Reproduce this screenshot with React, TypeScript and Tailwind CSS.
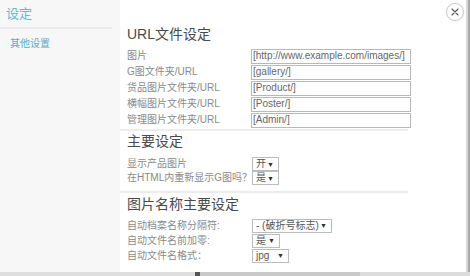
const FONT = "font-['Liberation_Sans','Noto_Sans_CJK_SC',sans-serif]"

const urlFields = [
  { label: '图片', value: '[http://www.example.com/images/]' },
  { label: 'G图文件夹/URL', value: '[gallery/]' },
  { label: '货品图片文件夹/URL', value: '[Product/]' },
  { label: '横幅图片文件夹/URL', value: '[Poster/]' },
  { label: '管理图片文件夹/URL', value: '[Admin/]' },
]

function SectionTitle({ children }: { children: React.ReactNode }) {
  return <h2 className="text-[14px] leading-[16px] text-[#4a4a4a]">{children}</h2>
}

function Divider() {
  return <div className="-ml-[7px] h-[2px] w-[288px] bg-[#ededed]" />
}

function FakeSelect({ value, width }: { value: string; width: string }) {
  return (
    <div
      className={`flex h-[14px] items-center justify-between border border-[#bcbcbc] bg-white pl-[3px] pr-[4px] text-[10px] text-[#555] ${width}`}
    >
      <span className="whitespace-nowrap leading-none">{value}</span>
      <span className="text-[7px] leading-none text-[#333]">▼</span>
    </div>
  )
}

function SelectRow({ label, value, width, h }: { label: string; value: string; width: string; h: string }) {
  return (
    <div className={`flex items-center ${h}`}>
      <span className="w-[125px] whitespace-nowrap text-[10px] leading-none text-[#8a8a8a]">{label}</span>
      <FakeSelect value={value} width={width} />
    </div>
  )
}

export default function App() {
  return (
    <div className={`flex h-[276px] w-[470px] flex-col overflow-hidden bg-[#d4d4d4] ${FONT}`}>
      <div className="flex h-[272px]">
        <div className="flex w-[466px] bg-white">
          {/* sidebar */}
          <aside className="w-[120px] bg-[#f7f7f7]">
            <div className="pl-[6px] pt-[6px] text-[13px] leading-[16px] text-[#62b9d1]">设定</div>
            <div className="mt-[5px] h-[2px] w-[112px] bg-[#ebebeb]" />
            <div className="pl-[10px] pt-[9px] text-[10px] leading-[12px] text-[#55adc6]">其他设置</div>
          </aside>

          {/* main */}
          <main className="relative flex-1 pl-[7px] pt-[26px]">
            <button className="absolute left-[326px] top-[3px] flex h-[18px] w-[18px] items-center justify-center rounded-full border border-[#cccccc] bg-white shadow-[0_0_2px_rgba(0,0,0,0.12)]">
              <svg width="8" height="8" viewBox="0 0 8 8" stroke="#555" strokeWidth="1.1" strokeLinecap="round">
                <path d="M1 1l6 6M7 1l-6 6" />
              </svg>
            </button>

            <SectionTitle>URL文件设定</SectionTitle>
            <div className="mt-[6px] flex flex-col">
              {urlFields.map((f) => (
                <div key={f.label} className="flex h-[16px] items-center">
                  <span className="w-[124px] text-[10px] leading-none text-[#8a8a8a]">{f.label}</span>
                  <div className="flex h-[15px] w-[160px] items-center border border-[#b8b8b8] px-[1px] text-[10px] leading-none text-[#666]">
                    {f.value}
                  </div>
                </div>
              ))}
            </div>
            <div className="mt-[1px]">
              <Divider />
            </div>

            <div className="mt-[2px]">
              <SectionTitle>主要设定</SectionTitle>
            </div>
            <div className="mt-[8px] flex flex-col">
              <SelectRow label="显示产品图片" value="开" width="w-[27px]" h="h-[14px]" />
              <SelectRow label="在HTML内重新显示G图吗？" value="是" width="w-[27px]" h="h-[14px]" />
            </div>
            <div className="mt-[6px]">
              <Divider />
            </div>

            <div className="mt-[3px]">
              <SectionTitle>图片名称主要设定</SectionTitle>
            </div>
            <div className="mt-[6px] flex flex-col">
              <SelectRow label="自动档案名称分隔符:" value="- (破折号标志)" width="w-[80px]" h="h-[15px]" />
              <SelectRow label="自动文件名前加零:" value="是" width="w-[28px]" h="h-[15px]" />
              <SelectRow label="自动文件名格式：" value="jpg" width="w-[37px]" h="h-[15px]" />
            </div>
          </main>
        </div>

        {/* right shadow */}
        <div className="flex w-[4px]">
          <div className="w-[2px] bg-[#d9d9d9]" />
          <div className="w-[2px] bg-[#a8a8a8]" />
        </div>
      </div>

      {/* bottom strip */}
      <div className="flex h-[4px]">
        <div className="w-[195px] bg-[#dedede]" />
        <div className="w-[5px] bg-[#555]" />
        <div className="w-[160px] bg-[#c9c9c9]" />
        <div className="flex-1 bg-[#dcdcdc]" />
      </div>
    </div>
  )
}
